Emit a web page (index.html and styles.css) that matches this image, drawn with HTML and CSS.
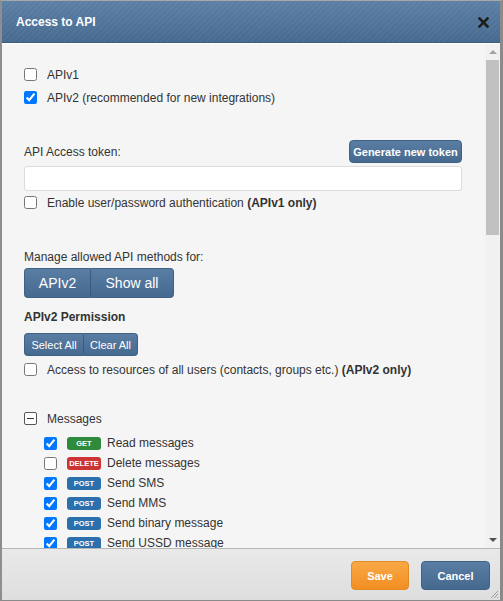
FILE: index.html
```html
<!DOCTYPE html>
<html>
<head>
<meta charset="utf-8">
<link rel="stylesheet" href="styles.css">
</head>
<body>
<div class="dialog">
  <div class="titlebar">
    <span class="title">Access to API</span>
    <svg class="close" width="11" height="11" viewBox="0 0 11 11"><path d="M1.5 1.5L9.5 9.5M9.5 1.5L1.5 9.5" stroke="#1e1e1e" stroke-width="2.6" stroke-linecap="square"/></svg>
  </div>
  <div class="body">
    <div class="pane">
      <label class="row"><input type="checkbox"><span>APIv1</span></label>
      <label class="row"><input type="checkbox" checked><span>APIv2 (recommended for new integrations)</span></label>

      <div class="token-head">
        <span>API Access token:</span>
        <button class="btn blue gen">Generate new token</button>
      </div>
      <input class="token" type="text">
      <label class="row"><input type="checkbox"><span>Enable user/password authentication <b>(APIv1 only)</b></span></label>

      <div class="manage">Manage allowed API methods for:</div>
      <div class="seg big">
        <button class="btn blue s1">APIv2</button><button class="btn blue s2">Show all</button>
      </div>
      <div class="perm">APIv2 Permission</div>
      <div class="seg small">
        <button class="btn blue s3">Select All</button><button class="btn blue s4">Clear All</button>
      </div>
      <label class="row access"><input type="checkbox"><span>Access to resources of all users (contacts, groups etc.) <b>(APIv2 only)</b></span></label>

      <div class="row group"><span class="minus"></span><span>Messages</span></div>
      <div class="list">
        <label class="item"><input type="checkbox" checked><span class="badge get">GET</span><span>Read messages</span></label>
        <label class="item"><input type="checkbox"><span class="badge del">DELETE</span><span>Delete messages</span></label>
        <label class="item"><input type="checkbox" checked><span class="badge post">POST</span><span>Send SMS</span></label>
        <label class="item"><input type="checkbox" checked><span class="badge post">POST</span><span>Send MMS</span></label>
        <label class="item"><input type="checkbox" checked><span class="badge post">POST</span><span>Send binary message</span></label>
        <label class="item"><input type="checkbox" checked><span class="badge post">POST</span><span>Send USSD message</span></label>
      </div>
    </div>
    <div class="scrollbar">
      <div class="arrow up"></div>
      <div class="thumb"></div>
      <div class="track"></div>
      <div class="arrow down"></div>
    </div>
  </div>
  <div class="footer">
    <button class="btn save">Save</button>
    <button class="btn blue cancel">Cancel</button>
    <svg class="grip" width="10" height="10" viewBox="0 0 10 10"><path d="M9 2L2 9M9 5L5 9M9 8L8 9" stroke="#9a9a9a" stroke-width="1"/></svg>
  </div>
</div>
</body>
</html>
```
FILE: styles.css
```css
html, body {
  margin: 0;
  padding: 0;
  background: #ffffff;
}
body {
  font-family: "Liberation Sans", Arial, sans-serif;
  font-size: 12px;
  color: #333333;
}
.dialog {
  box-sizing: border-box;
  width: 503px;
  height: 601px;
  border-top: 1px solid #a8a8a8;
  border-left: 2px solid #8e8e8e;
  border-right: 3px solid #8a8a8a;
  border-bottom: 1px solid #8a8a8a;
  display: flex;
  flex-direction: column;
  background: #f5f5f5;
}
.titlebar {
  height: 42px;
  flex: none;
  display: flex;
  align-items: center;
  justify-content: space-between;
  padding: 0 11px 0 14px;
  box-sizing: border-box;
  background:
    repeating-linear-gradient(135deg, rgba(255,255,255,0.035) 0px, rgba(255,255,255,0.035) 2px, rgba(0,0,0,0) 2px, rgba(0,0,0,0) 4px),
    linear-gradient(#5c7fa6, #46698f);
  border-bottom: 1px solid #3d5d80;
}
.title {
  color: #ffffff;
  font-weight: bold;
  font-size: 12px;
  padding-top: 1px;
}
.close {
  display: block;
  margin-top: 1px;
}
.body {
  height: 505px;
  flex: none;
  display: flex;
  border-top: 1px solid #ffffff;
  box-sizing: border-box;
}
.pane {
  flex: 1;
  overflow: hidden;
  padding: 19px 23px 0 22px;
  box-sizing: border-box;
}
.row {
  display: flex;
  align-items: center;
  height: 23px;
}
input[type="checkbox"] {
  width: 13px;
  height: 13px;
  margin: 0 10px 0 0;
  flex: none;
}
.token-head {
  margin-top: 31px;
  height: 23px;
  display: flex;
  align-items: center;
  justify-content: space-between;
}
.btn {
  font-family: "Liberation Sans", Arial, sans-serif;
  color: #ffffff;
  border: 1px solid #3f6186;
  border-radius: 4px;
  padding: 0;
  cursor: pointer;
}
.blue {
  background: linear-gradient(#5a7da4, #46698f);
}
.gen {
  width: 113px;
  height: 23px;
  font-size: 11px;
  font-weight: bold;
}
.token {
  display: block;
  box-sizing: border-box;
  width: 100%;
  height: 25px;
  margin: 3px 0 0 0;
  background: #ffffff;
  border: 1px solid #dcdcdc;
  border-radius: 3px;
}
.manage {
  margin-top: 33px;
  height: 20px;
  line-height: 20px;
}
.seg {
  display: flex;
}
.seg .btn {
  border-radius: 0;
}
.seg .btn:first-child {
  border-radius: 4px 0 0 4px;
  border-right-color: #3a5a7e;
}
.seg .btn:last-child {
  border-radius: 0 4px 4px 0;
  border-left: none;
}
.big {
  margin-top: 1px;
}
.big .btn {
  height: 30px;
  font-size: 14px;
}
.s1 { width: 67px; }
.s2 { width: 83px; }
.perm {
  margin-top: 9px;
  height: 20px;
  line-height: 20px;
  font-weight: bold;
  font-size: 12px;
}
.small {
  margin-top: 6px;
}
.small .btn {
  height: 23px;
  font-size: 11px;
}
.s3 { width: 60px; }
.s4 { width: 54px; }
.access {
  margin-top: 2px;
}
.group {
  margin-top: 26px;
}
.minus {
  position: relative;
  width: 13px;
  height: 13px;
  box-sizing: border-box;
  border: 1px solid #555555;
  border-radius: 2px;
  background: #ffffff;
  margin-right: 10px;
  flex: none;
}
.minus::after {
  content: "";
  position: absolute;
  left: 2px;
  right: 2px;
  top: 5px;
  height: 1px;
  background: #333333;
}
.list {
  margin-top: 3px;
  padding-left: 20px;
}
.item {
  display: flex;
  align-items: center;
  height: 20px;
}
.badge {
  width: 34px;
  height: 13px;
  line-height: 13px;
  border-radius: 3px;
  color: #ffffff;
  font-weight: bold;
  font-size: 7.5px;
  text-align: center;
  margin-right: 6px;
  flex: none;
}
.get { background: #2f8a3b; }
.del { background: #cc3333; }
.post { background: #2b70ad; }
.scrollbar {
  width: 15px;
  flex: none;
  display: flex;
  flex-direction: column;
  align-items: center;
  background: #f1f1f1;
}
.arrow {
  width: 0;
  height: 0;
  border-left: 4px solid transparent;
  border-right: 4px solid transparent;
  flex: none;
}
.arrow.up {
  margin-top: 6px;
  border-bottom: 4px solid #a3a3a3;
}
.thumb {
  margin-top: 6px;
  width: 13px;
  height: 175px;
  background: #c1c1c1;
  flex: none;
}
.track {
  flex: 1;
}
.arrow.down {
  margin-bottom: 6px;
  border-top: 4px solid #505050;
}
.footer {
  flex: 1;
  position: relative;
  display: flex;
  justify-content: flex-end;
  align-items: flex-start;
  gap: 12px;
  padding: 12px 10px 0 0;
  border-top: 1px solid #b5b5b5;
  background: linear-gradient(#e9e9e9, #dedede);
}
.save {
  width: 58px;
  height: 29px;
  font-size: 11px;
  font-weight: bold;
  background: linear-gradient(#f9a947, #f28e22);
  border-color: #e38a22;
}
.cancel {
  width: 69px;
  height: 29px;
  font-size: 11px;
  font-weight: bold;
}
.grip {
  position: absolute;
  right: 1px;
  bottom: 1px;
}
```
